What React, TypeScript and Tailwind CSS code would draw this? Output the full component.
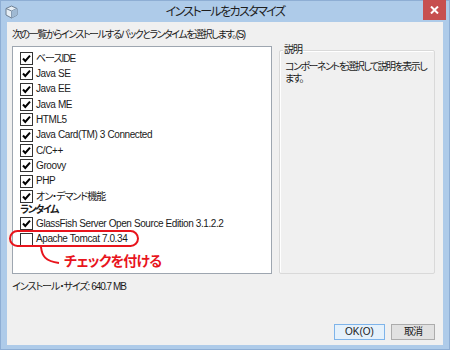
const items = [
  { label: 'ベースIDE', jp: true },
  { label: 'Java SE', jp: false },
  { label: 'Java EE', jp: false },
  { label: 'Java ME', jp: false },
  { label: 'HTML5', jp: false },
  { label: 'Java Card(TM) 3 Connected', jp: false },
  { label: 'C/C++', jp: false },
  { label: 'Groovy', jp: false },
  { label: 'PHP', jp: false },
  { label: 'オン・デマンド機能', jp: true },
]

const font = "font-['Liberation_Sans','Noto_Sans_CJK_JP',sans-serif] [font-feature-settings:'palt']"

const CheckBox = ({ checked }: { checked: boolean }) => (
  <svg width="13" height="13" viewBox="0 0 13 13" className="shrink-0">
    <rect x="0.5" y="0.5" width="12" height="12" fill="#fff" stroke="#333" />
    {checked && <path d="M3 6.5 L5.3 9 L10 3.6" fill="none" stroke="#000" strokeWidth="2" />}
  </svg>
)

const Row = ({ label, checked, jp }: { label: string; checked: boolean; jp?: boolean }) => (
  <div className="flex items-center h-[15.33px] gap-[3px]">
    <CheckBox checked={checked} />
    <span className={`text-[10px] text-[#1a1a1a] whitespace-nowrap leading-none ${jp ? 'tracking-[-1px]' : 'tracking-[-0.4px]'}`}>{label}</span>
  </div>
)

export default function App() {
  return (
    <div className={`relative w-[450px] h-[350px] bg-[#aecbe9] border border-[#8eaed4] flex flex-col ${font}`}>
      {/* title bar */}
      <div className="relative h-[21px] flex items-center justify-center shrink-0">
        <svg width="13" height="14" viewBox="0 0 13 14" className="absolute left-[4px] top-[4px]">
          <path d="M6.5 1 L12 3.5 L12 10 L6.5 13 L1 10 L1 3.5 Z" fill="#e6eef5" stroke="#6d7f92" strokeWidth="1" />
          <path d="M1 3.5 L6.5 6 L12 3.5 M6.5 6 L6.5 13" fill="none" stroke="#6d7f92" strokeWidth="1" />
          <path d="M6.5 6 L12 3.5 L12 10 L6.5 13 Z" fill="#9fb9d3" />
        </svg>
        <span className="text-[12px] tracking-[-1.6px] text-[#1e1e1e] leading-none mt-[1px]">インストールをカスタマイズ</span>
        <div className="absolute right-[3px] top-[-1px] w-[23px] h-[20px] bg-[#c75050] flex items-center justify-center">
          <svg width="9" height="8" viewBox="0 0 9 8">
            <path d="M1 0.5 L8 7.5 M8 0.5 L1 7.5" stroke="#fff" strokeWidth="2" />
          </svg>
        </div>
      </div>

      {/* content */}
      <div className="flex-1 mx-[6px] mb-[4px] bg-[#f0f0f0] flex flex-col pl-[5px] pr-[8px]">
        <div className="h-[24px] flex items-center text-[10px] tracking-[-1.5px] text-[#1a1a1a]">次の一覧からインストールするパックとランタイムを選択します。(S)</div>

        <div className="flex gap-[7px]">
          <div className="w-[260px] h-[228px] bg-white border border-[#9ea6b0] pt-[4px] pl-[7px]">
            {items.map(it => (
              <Row key={it.label} label={it.label} jp={it.jp} checked />
            ))}
            <div className="h-[12px] flex items-center text-[10px] tracking-[-1.5px] font-bold text-[#1a1a1a] leading-none">ランタイム</div>
            <Row label="GlassFish Server Open Source Edition 3.1.2.2" checked />
            <Row label="Apache Tomcat 7.0.34" checked={false} />
          </div>

          <div className="flex-1 relative mt-[4px] h-[224px] border border-[#d9d9d9] rounded-[2px] shadow-[inset_1px_1px_0_#fff]">
            <span className="absolute left-[3px] top-[-8px] px-[1px] bg-[#f0f0f0] text-[10px] tracking-[-1px] leading-[14px] text-[#1a1a1a]">説明</span>
            <p className="mt-[10px] ml-[5px] mr-[4px] text-[10px] tracking-[-1.5px] leading-[12px] text-[#1a1a1a]">コンポーネントを選択して説明を表示します。</p>
          </div>
        </div>

        <div className="h-[24px] flex items-center text-[10px] tracking-[-1px] text-[#1a1a1a]">インストール・サイズ: 640.7 MB</div>

        <div className="flex-1 flex items-end justify-end gap-[6px] pb-[5px]">
          <button className="w-[51px] h-[16px] border border-[#7eb4ea] bg-[#e5f1fb] text-[10px] leading-none text-[#1a1a1a]">OK(O)</button>
          <button className="w-[44px] h-[16px] border border-[#acacac] bg-[#e1e1e1] text-[10px] tracking-[-1px] leading-none text-[#1a1a1a]">取消</button>
        </div>
      </div>

      {/* annotation */}
      <div className="absolute left-[8px] top-[229px] w-[130px] h-[17px] rounded-full border-2 border-[#e8141c]" />
      <svg width="30" height="20" viewBox="0 0 30 20" className="absolute left-[36px] top-[245px]">
        <path d="M4 1 C5 10 8 15 22 17" fill="none" stroke="#e8141c" strokeWidth="2" />
      </svg>
      <span className="absolute left-[63px] top-[251px] text-[14px] tracking-[-0.8px] font-bold text-[#e8141c] leading-[18px]">チェックを付ける</span>
    </div>
  )
}
